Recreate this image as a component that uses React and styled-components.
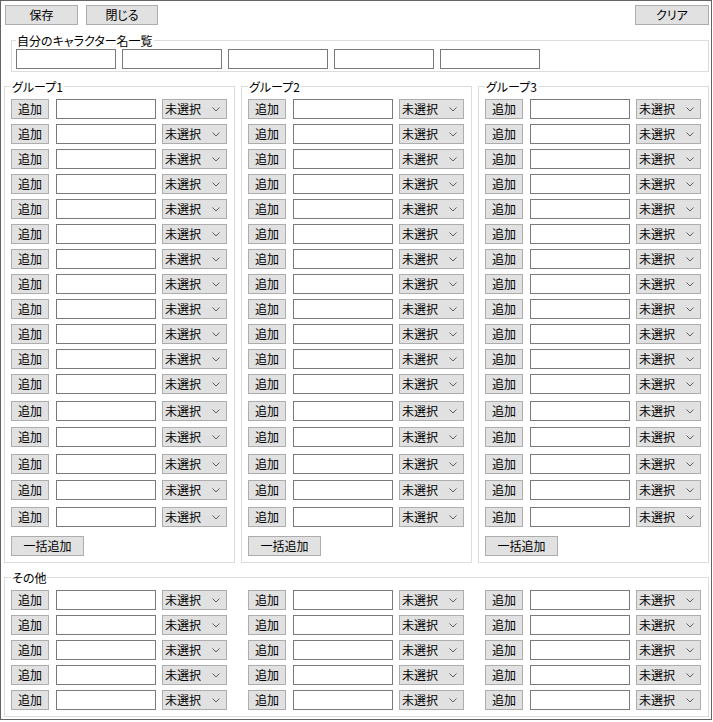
import React from "react";
import styled, { createGlobalStyle } from "styled-components";

const GlobalStyle = createGlobalStyle`
  html, body {
    margin: 0;
    padding: 0;
    background: #ffffff;
  }
  body {
    font-family: "Noto Sans CJK JP", "Noto Sans", sans-serif;
    font-size: 12px;
    color: #000000;
  }
  * {
    box-sizing: border-box;
  }
`;

const Window = styled.div`
  width: 712px;
  height: 720px;
  border: 1px solid #646464;
  background: #ffffff;
  display: flex;
  flex-direction: column;
  padding: 0 2px 0 3px;
`;

const Toolbar = styled.div`
  display: flex;
  align-items: flex-start;
  gap: 8px;
  padding: 4px 0 0 1px;
`;

const Button = styled.button`
  width: ${(p) => p.$width || 38}px;
  height: 20px;
  margin: 0;
  padding: 0;
  border: 1px solid #adadad;
  border-radius: 0;
  background: #e1e1e1;
  color: #000000;
  font-family: inherit;
  font-size: 12px;
  line-height: 18px;
  font-feature-settings: "palt";
  flex: none;
  cursor: default;
  margin-left: ${(p) => (p.$pushRight ? "auto" : "0")};
`;

const Frame = styled.fieldset`
  margin: ${(p) => p.$margin || "8px 0 0 0"};
  padding: ${(p) => p.$padding || "6px 6px 6px 6px"};
  border: 1px solid #dcdcdc;
  min-width: 0;
  width: ${(p) => (p.$width ? `${p.$width}px` : "auto")};
  flex: none;
`;

const Caption = styled.legend`
  padding: 0 1px;
  margin: 0;
  font-size: 12px;
  line-height: 13px;
  font-feature-settings: "palt";
  color: #000000;
`;

const NameRow = styled.div`
  display: flex;
  gap: 6px;
`;

const TextBox = styled.input`
  width: 100px;
  height: 20px;
  margin: 0;
  padding: 0 2px;
  border: 1px solid #7a7a7a;
  border-radius: 0;
  background: #ffffff;
  font-family: inherit;
  font-size: 12px;
  outline: none;
  flex: none;
`;

const Groups = styled.div`
  display: flex;
  gap: 6px;
`;

const Column = styled.div`
  display: flex;
  flex-direction: column;
`;

const EntryRow = styled.div`
  display: flex;
  align-items: flex-start;
  margin-top: ${(p) => p.$top}px;
  gap: 6px;

  & > button {
    margin-right: 1px;
  }
`;

const Combo = styled.div`
  width: 65px;
  height: 20px;
  display: flex;
  align-items: center;
  justify-content: space-between;
  padding: 0 6px 0 2px;
  border: 1px solid #adadad;
  background: #e1e1e1;
  font-size: 12px;
  line-height: 18px;
  flex: none;
`;

const Chevron = styled.svg`
  width: 8px;
  height: 5px;
  flex: none;
  margin-top: 1px;
`;

const BulkButton = styled(Button)`
  margin-top: 9px;
`;

const OtherGrid = styled.div`
  display: grid;
  grid-template-columns: repeat(3, 216px);
  column-gap: 21px;
`;

// row spacing as laid out on the form (the lower rows sit a little wider apart)
const groupGaps = [0, 5, 5, 5, 5, 5, 5, 5, 5, 5, 5, 5, 7, 6, 7, 6, 7];
const otherGaps = [0, 5, 5, 5, 5];

const Entry = ({ top }) => (
  <EntryRow $top={top}>
    <Button>追加</Button>
    <TextBox type="text" />
    <Combo>
      <span>未選択</span>
      <Chevron viewBox="0 0 8 5">
        <polyline
          points="0.5,0.5 4,4 7.5,0.5"
          fill="none"
          stroke="#606060"
          strokeWidth="1"
        />
      </Chevron>
    </Combo>
  </EntryRow>
);

const App = () => {
  const groups = ["グループ1", "グループ2", "グループ3"];

  return (
    <>
      <GlobalStyle />
      <Window>
        <Toolbar>
          <Button $width={73}>保存</Button>
          <Button $width={72}>閉じる</Button>
          <Button $width={74} $pushRight>
            クリア
          </Button>
        </Toolbar>

        <Frame $margin="9px 0 0 7px" $padding="2px 4px 2px 4px">
          <Caption>自分のキャラクター名一覧</Caption>
          <NameRow>
            {[0, 1, 2, 3, 4].map((i) => (
              <TextBox key={i} type="text" />
            ))}
          </NameRow>
        </Frame>

        <Groups>
          {groups.map((name) => (
            <Frame key={name} $width={231}>
              <Caption>{name}</Caption>
              <Column>
                {groupGaps.map((gap, i) => (
                  <Entry key={i} top={gap} />
                ))}
                <BulkButton $width={73}>一括追加</BulkButton>
              </Column>
            </Frame>
          ))}
        </Groups>

        <Frame>
          <Caption>その他</Caption>
          <OtherGrid>
            {[0, 1, 2].map((col) => (
              <Column key={col}>
                {otherGaps.map((gap, i) => (
                  <Entry key={i} top={gap} />
                ))}
              </Column>
            ))}
          </OtherGrid>
        </Frame>
      </Window>
    </>
  );
};

export default App;
